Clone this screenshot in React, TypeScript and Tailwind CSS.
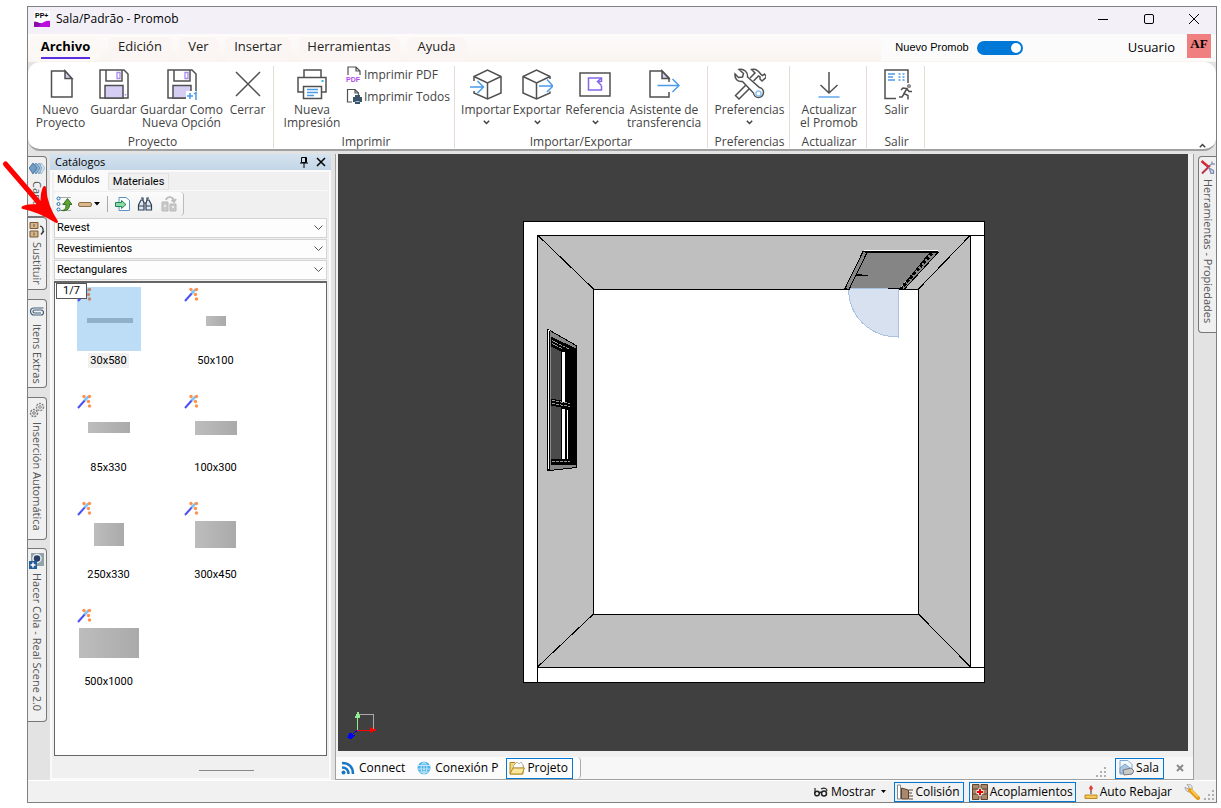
import type { ReactNode } from "react";
import clsx from "clsx";

const INK = "#505050";
const LILAC = "#d6cdf5";
const BLUE = "#4a9bea";

function Svg({ w = 32, h = 32, children }: { w?: number; h?: number; children: ReactNode }) {
  return (
    <svg
      width={w}
      height={h}
      viewBox={`0 0 ${w} ${h}`}
      fill="none"
      stroke={INK}
      strokeWidth="1.5"
      aria-hidden="true"
      className="shrink-0"
    >
      {children}
    </svg>
  );
}

/* ---------- ribbon icons ---------- */

const NewIcon = () => (
  <Svg>
    <path d="M6.5 3H20l7 8v18H6.5z" />
    <path d="M20 3v7.500h7z" fill={LILAC} />
  </Svg>
);

const SaveIcon = ({ plus = false }: { plus?: boolean }) => (
  <Svg>
    <path d={plus ? "M20 30H2V2h24l4 4v17" : "M2 2h24l4 4v24H2z"} />
    <path d="M8 2v11h16V2" />
    <path d="M7 30V17.500h18V30z" fill={LILAC} />
    <path d="M19 4.500h3v6h-3z" stroke="#a98bf0" strokeWidth="1.3" />
    {plus ? (
      <>
        <path d="M20 23h12v9H20z" fill="#fff" stroke="none" />
        <path d="M21 28h6M24 25v6M28 26l2-1.500V32" stroke={BLUE} />
      </>
    ) : (
      <path d="M27.500 26v1.500" stroke="#a98bf0" />
    )}
  </Svg>
);

const CloseIcon = () => (
  <Svg>
    <path d="M4 4l24 24M28 4L4 28" />
  </Svg>
);

const PrinterIcon = () => (
  <Svg>
    <path d="M8 9V2h17v7M7 24H2V9.500h28V24h-4" />
    <path d="M7.500 18.500h18v12h-18z" />
    <path d="M11 21.500h11M11 24.500h11M11 27.500h7" stroke={BLUE} />
    <path d="M25.500 13h2" stroke="#27b3f0" strokeWidth="2" />
  </Svg>
);

const CubeIcon = ({ out = false }: { out?: boolean }) => (
  <Svg>
    {out ? (
      <>
        <path d="M29 11V8.500L15.500 2 2 8.500V25l13.500 6L29 25v-1.500" />
        <path d="M2 8.500L15.500 15 29 8.500M15.500 15v16" />
        <path d="M18 18h14M26 11.500l6 6.500-6 6" stroke={BLUE} />
      </>
    ) : (
      <>
        <path d="M4 13V8.500L17.500 2 31 8.500V25l-13.500 6L4 25v-2" />
        <path d="M4 8.500L17.500 15 31 8.500M17.500 15v16" />
        <path d="M0 19h13M7.500 13l6 6-6 6" stroke={BLUE} />
      </>
    )}
  </Svg>
);

const ReferenceIcon = () => (
  <Svg>
    <path d="M1 5h30v23H1z" />
    <path d="M22.500 14V10H9.500v12h13v-4.500" stroke="#8566ea" />
    <path d="M22.500 10l-4 3.500 4 4M18.500 13.500h4" stroke="#8566ea" />
  </Svg>
);

const TransferIcon = () => (
  <Svg>
    <path d="M21 24v5H2V3h12l7 7v4" />
    <path d="M14 3v7.500h7z" fill={LILAC} />
    <path d="M9.500 17.500H31M24.500 11l6.500 6.500-6.500 6.500" stroke={BLUE} />
  </Svg>
);

const ToolsIcon = () => (
  <Svg>
    <path d="M5 1.500l4.500 4L8.500 9 4.500 9.500 1 6c-.5 5 2.500 8 7.500 7.500l11 11.500a5 5 0 1 0 6-5.500L13.500 9C14 4 10 .5 5 1.500z" />
    <circle cx="24.500" cy="25.500" r="2.600" stroke="#8cc3f5" />
    <path d="M16 10l5-5-3.500-3.500c4-1 7 1 9.500 5l1.500 1 2-1.500 2 3-4.500 4-2-2v-2l-1.500-1-5 5" />
    <path d="M12 17L1.500 27.500 5 31l10.500-10.500" />
  </Svg>
);

const UpdateIcon = () => (
  <Svg>
    <path d="M16 4v21M7.500 17l8.500 8 8.500-8" />
    <path d="M5.500 29h21" stroke={BLUE} strokeWidth="1.300" />
  </Svg>
);

const ExitIcon = () => (
  <Svg>
    <path d="M15 30.500H4V2h23v13" />
    <path d="M7 6h7M7 9h5M7 12h7M17.500 6h2M21.500 6h2M17.500 9h2M21.500 9h2M17.500 12h2M21.500 12h2" stroke={BLUE} />
    <circle cx="28" cy="18" r="1.300" strokeWidth="1.100" />
    <path d="M20 22l2-2 4 .5-3 5 4 2v4M23 26l-2 3h-3M26 21l2 2.500h3" />
  </Svg>
);

const PdfIcon = () => (
  <Svg w={16} h={16}>
    <path d="M2 9V1h8l4 4v4M10 1v4h4" strokeWidth="1.200" />
    <text x="0" y="16" fontSize="7" fontWeight="700" fill="#b44df0" stroke="none" fontFamily="Liberation Sans, sans-serif">
      PDF
    </text>
  </Svg>
);

const PrintAllIcon = () => (
  <Svg w={16} h={16}>
    <path d="M6 14H1.500V1.500H9L12.500 5v3M9 1.500V5h3.500" strokeWidth="1.200" />
    <path d="M9 7h5v2h2v5h-2v2H9v-2H7V9h2z" fill="#3c5468" stroke="none" />
    <path d="M9.500 13.500h4" stroke="#9fc5e8" strokeWidth="1" />
  </Svg>
);

/* ---------- ribbon ---------- */

function Chevron() {
  return (
    <svg width="7" height="5" viewBox="0 0 7 5" fill="none" stroke="#404040" strokeWidth="1.500" aria-hidden="true">
      <path d="M.8.8l2.700 2.700L6.200.8" />
    </svg>
  );
}

type ItemProps = { icon: ReactNode; width: string; label: string; menu?: boolean };

function RibbonItem({ icon, width, label, menu }: ItemProps) {
  return (
    <button className={clsx("flex flex-col items-center pt-0.5", width)}>
      {icon}
      <span className="mt-[3px] whitespace-pre">{label}</span>
      {menu && (
        <span className="mt-1">
          <Chevron />
        </span>
      )}
    </button>
  );
}

function RibbonGroup({ label, className, children }: { label: string; className: string; children: ReactNode }) {
  return (
    <section
      className={clsx("flex shrink-0 flex-col border-r border-[#e6dcd6] text-xs leading-[13px] text-[#444]", className)}
    >
      <div className="flex h-[69px] justify-center">{children}</div>
      <h2 className="text-center">{label}</h2>
    </section>
  );
}

function Ribbon() {
  return (
    <div className="flex h-[89px] shrink-0 rounded-xl border-b-2 border-[#a0a0a0] bg-white pt-1 pb-px">
      <RibbonGroup label="Proyecto" className="w-[246px] pl-1">
        <RibbonItem icon={<NewIcon />} width="w-[54px]" label={"Nuevo\nProyecto"} />
        <RibbonItem icon={<SaveIcon />} width="w-[52px]" label="Guardar" />
        <RibbonItem icon={<SaveIcon plus />} width="w-[84px]" label={"Guardar Como\nNueva Opción"} />
        <RibbonItem icon={<CloseIcon />} width="w-[48px]" label="Cerrar" />
      </RibbonGroup>
      <RibbonGroup label="Imprimir" className="w-[181px] pl-1">
        <RibbonItem icon={<PrinterIcon />} width="w-[60px]" label={"Nueva\nImpresión"} />
        <div className="ml-1 flex flex-col gap-1.5">
          <button className="flex items-center gap-0.5 whitespace-nowrap">
            <PdfIcon />
            Imprimir PDF
          </button>
          <button className="flex items-center gap-0.5 whitespace-nowrap">
            <PrintAllIcon />
            Imprimir Todos
          </button>
        </div>
      </RibbonGroup>
      <RibbonGroup label="Importar/Exportar" className="w-[253px]">
        <RibbonItem icon={<CubeIcon />} width="w-[50px]" label="Importar" menu />
        <RibbonItem icon={<CubeIcon out />} width="w-[52px]" label="Exportar" menu />
        <RibbonItem icon={<ReferenceIcon />} width="w-[64px]" label="Referencia" menu />
        <RibbonItem icon={<TransferIcon />} width="w-[74px]" label={"Asistente de\ntransferencia"} />
      </RibbonGroup>
      <RibbonGroup label="Preferencias" className="w-[82px] pl-0.5">
        <RibbonItem icon={<ToolsIcon />} width="w-[78px]" label="Preferencias" menu />
      </RibbonGroup>
      <RibbonGroup label="Actualizar" className="w-[77px] pl-0.5">
        <RibbonItem icon={<UpdateIcon />} width="w-[72px]" label={"Actualizar\nel Promob"} />
      </RibbonGroup>
      <RibbonGroup label="Salir" className="w-[58px] pl-0.5">
        <RibbonItem icon={<ExitIcon />} width="w-[52px]" label="Salir" />
      </RibbonGroup>
      <button aria-label="Contraer cinta" className="mt-auto mr-2.5 ml-auto rotate-180">
        <Chevron />
      </button>
    </div>
  );
}

/* ---------- title and menu ---------- */

function TitleBar() {
  return (
    <header className="flex h-[27px] shrink-0 items-center bg-[#f3f0f8] pb-[3px] pl-1.5 text-black">
      <svg width="16" height="16" viewBox="0 0 16 16" aria-hidden="true">
        <path d="M0 0h16v16H0z" fill="#fff" />
        <path d="M0 11c3-1 5 2 8 1s4-3 8-2v6H0z" fill="#bb0fe0" />
        <path d="M0 11c3-1 5 2 8 1l-4 4H0z" fill="#8a0cab" />
        <text x="1" y="7" fontSize="7" fontWeight="700" fontFamily="Liberation Sans, sans-serif">
          PP+
        </text>
      </svg>
      <h1 className="ml-1.5 text-xs">Sala/Padrão - Promob</h1>
      <div className="mr-4 ml-auto flex items-center gap-8">
        <button aria-label="Minimizar" className="flex w-3.5 justify-center">
          <span className="h-px w-2.5 bg-black" />
        </button>
        <button aria-label="Maximizar" className="flex w-3.5 justify-center">
          <span className="size-2.5 rounded-xs border border-black" />
        </button>
        <button aria-label="Cerrar ventana">
          <svg width="12" height="12" viewBox="0 0 12 12" stroke="#000" aria-hidden="true">
            <path d="M1 1l10 10M11 1L1 11" />
          </svg>
        </button>
      </div>
    </header>
  );
}

const MENUS = [
  { label: "Edición", width: "w-[64px]" },
  { label: "Ver", width: "w-[39px]" },
  { label: "Insertar", width: "w-[66px]" },
  { label: "Herramientas", width: "w-[102px]" },
  { label: "Ayuda", width: "w-[59px]" },
];

function MenuBar() {
  return (
    <nav className="flex h-7 shrink-0 items-start bg-linear-to-b from-[#fdfcfb] to-[#f9f4f0] text-[13px] text-[#222]">
      <div className="flex gap-[7px] pt-[3px] pl-0.5">
        <button className="flex h-6 w-[71px] justify-center rounded-md bg-[#fbf8f5] font-bold text-black">
          <span className="h-[22px] border-b-2 border-[#5b2fe0]">Archivo</span>
        </button>
        {MENUS.map((m) => (
          <button key={m.label} className={clsx("flex h-6 justify-center rounded-md bg-[#fbf6f3]", m.width)}>
            {m.label}
          </button>
        ))}
      </div>
      <div className="ml-auto flex h-[27px] items-center bg-[#fcfbfb] pl-3.5 text-black">
        <label className="flex items-center gap-2 font-['Liberation_Sans',sans-serif] text-[11px]">
          Nuevo Promob
          <input type="checkbox" defaultChecked className="peer sr-only" />
          <span className="flex h-3.5 w-[46px] items-center justify-end rounded-full bg-[#0078d7] px-0.5">
            <span className="size-2.5 rounded-full bg-white" />
          </span>
        </label>
        <button className="ml-[105px]">Usuario</button>
        <span className="mr-[5px] ml-3 flex size-6 items-start justify-center self-start bg-[#f08080] font-['Liberation_Serif',serif] text-[13px] font-bold">
          AF
        </span>
      </div>
    </nav>
  );
}

/* ---------- side tabs ---------- */

function SideTab({ icon, label, className }: { icon: ReactNode; label: string; className: string }) {
  return (
    <button
      className={clsx(
        "flex w-[19px] items-center gap-1 rounded-r border border-l-0 border-[#777] bg-[#f0f0f0] pt-1 text-[11px] leading-4 whitespace-nowrap text-[#555] [writing-mode:vertical-rl]",
        className
      )}
    >
      {icon}
      {label}
    </button>
  );
}

const LayersIcon = () => (
  <Svg w={16} h={16}>
    <path d="M9 7l3-5 4 5-4 6z" fill="#d9e6f2" stroke="#8fb0cc" strokeWidth=".8" />
    <path d="M6 7l4-5 3 5-3 6z" fill="#b4cde2" stroke="#6d97bb" strokeWidth=".8" />
    <path d="M3 7l4-5 4 5-4 6z" fill="#8fb3d3" stroke="#54809f" strokeWidth=".8" />
    <path d="M0 7l4-5 4 5-4 6z" fill="#6f9dc6" stroke="#3e6c96" strokeWidth=".8" />
  </Svg>
);

const SwapIcon = () => (
  <Svg w={16} h={16}>
    <path d="M1 .5h8v6H1zM1 9h8v6H1z" fill="#d4b48a" stroke="#7a5a34" strokeWidth="1" />
    <path d="M5 2v3M5 10.500v3" stroke="#7a5a34" strokeWidth="1" />
    <path d="M11 4c4 1 4 6 1 8M15 9l-3 3.500" strokeWidth="1.200" stroke="#333" />
  </Svg>
);

const ClipIcon = () => (
  <Svg w={16} h={16}>
    <path
      d="M14.500 4H5a3.500 3.500 0 0 0 0 7h7a2.500 2.500 0 0 0 0-5H5.500a1.500 1.500 0 0 0 0 3H12"
      strokeWidth="1.200"
      stroke="#44607c"
    />
  </Svg>
);

const GearsIcon = () => (
  <Svg w={16} h={16}>
    <circle cx="5" cy="11" r="3.500" strokeDasharray="2 1" stroke="#777" />
    <circle cx="5" cy="11" r="1.300" strokeWidth="1" stroke="#777" />
    <circle cx="11" cy="5" r="3.500" strokeDasharray="2 1" stroke="#888" />
    <circle cx="11" cy="5" r="1.300" strokeWidth="1" stroke="#888" />
  </Svg>
);

const SceneIcon = () => (
  <Svg w={16} h={16}>
    <path d="M2 0h13v13H2z" fill="#93a3a8" stroke="none" />
    <circle cx="8" cy="5.500" r="4" fill="#263f66" stroke="#e8eef2" />
    <path d="M0 8h8v8H0z" fill="#245d9c" stroke="none" />
    <path d="M1.500 12h5M4 9.500v5" stroke="#fff" />
  </Svg>
);

const PropertiesIcon = () => (
  <Svg w={16} h={16}>
    <path d="M2 14.500l8-8" stroke="#c0304a" strokeWidth="2" />
    <path d="M10 6l2-1V2.500M12 5h3" stroke="#8e9bbd" strokeWidth="1.500" />
    <path d="M1.500 2l7 6" stroke="#d02a35" strokeWidth="2.500" />
    <path d="M9 9l2 1 2.500 1.500v3h-2.500z" fill="#c9d3e8" stroke="#7f8db5" strokeWidth="1.200" />
  </Svg>
);

/* ---------- catalogue panel ---------- */

const CATALOG = [
  { name: "30x580", x: 10, y: 31, w: 46, h: 5 },
  { name: "50x100", x: 22, y: 29, w: 20, h: 10 },
  { name: "85x330", x: 11, y: 28, w: 42, h: 11 },
  { name: "100x300", x: 11, y: 27, w: 42, h: 14 },
  { name: "250x330", x: 17, y: 22, w: 30, h: 23 },
  { name: "300x450", x: 11, y: 20, w: 41, h: 27 },
  { name: "500x1000", x: 2, y: 20, w: 60, h: 30 },
];

function Thumb({ item, selected }: { item: (typeof CATALOG)[number]; selected: boolean }) {
  return (
    <button className="flex w-[107px] flex-col items-center gap-0.5">
      <svg width="64" height="64" viewBox="0 0 64 64" aria-hidden="true" className={selected ? "bg-[#bddcf5]" : ""}>
        <path d="M1 14l8-9" stroke="#4b50f5" strokeWidth="2" />
        <path d="M7.500 6.500l4-4" stroke="#7cc4f8" strokeWidth="2.500" />
        <g fill={selected ? "#c08868" : "#ff914d"}>
          <circle cx="7" cy="2.500" r="1.700" />
          <circle cx="12.500" cy="2.500" r="1.700" />
          <circle cx="11.500" cy="7.500" r="1.700" />
          <circle cx="12.500" cy="12" r="1.700" />
        </g>
        <rect x={item.x} y={item.y} width={item.w} height={item.h} fill={selected ? "#8fb0c8" : "url(#tile)"} />
      </svg>
      <span className={clsx("px-0.5 leading-[15px]", selected && "bg-[#f0f0f0]")}>{item.name}</span>
    </button>
  );
}

function Combo({ label, value }: { label: string; value: string }) {
  return (
    <div className="grid h-5 items-center border border-[#d4d4d4] bg-[#fdfdfd]">
      <select
        aria-label={label}
        defaultValue={value}
        className="col-start-1 row-start-1 h-[18px] w-full appearance-none bg-transparent pl-0.5 outline-none"
      >
        <option>{value}</option>
      </select>
      <svg
        width="9"
        height="6"
        viewBox="0 0 9 6"
        fill="none"
        stroke="#555"
        aria-hidden="true"
        className="pointer-events-none col-start-1 row-start-1 mr-[3px] justify-self-end"
      >
        <path d="M.5.500l4 4 4-4" />
      </svg>
    </div>
  );
}

function CatalogToolbar() {
  return (
    <div className="flex h-[24px] w-[130px] items-center rounded border-r border-[#bbb] bg-linear-to-b from-[#fcfcfc] to-[#f0f0f0] pl-0.5">
      <button aria-label="Subir nivel">
        <Svg w={16} h={16}>
          <path d="M3 1.500h12M3 14.500h12M6 8h9" stroke="#aaa" strokeWidth="1" />
          <path d="M5.500 14.500c4 0 4.500-3 4.500-6H7l4.500-6 4.500 6h-2.500c0 4-2 7-8 6z" fill="#5fa338" stroke="#35711b" strokeWidth="1" />
          <g fill="#fff" stroke="#1c6dad" strokeWidth="1">
            <circle cx="2.500" cy="2.500" r="1.500" />
            <circle cx="2.500" cy="8" r="1.500" />
            <circle cx="2.500" cy="13.500" r="1.500" />
          </g>
        </Svg>
      </button>
      <button aria-label="Color" className="ml-1.5 flex items-center gap-0.5">
        <span className="h-[5px] w-3.5 rounded-xs border border-[#927047] bg-[#d8b98c]" />
        <svg width="6" height="4" viewBox="0 0 6 4" aria-hidden="true">
          <path d="M0 0h6L3 3.500z" />
        </svg>
      </button>
      <span className="mx-[7px] h-4 w-px bg-[#aaa]" />
      <button aria-label="Importar módulo">
        <Svg w={16} h={16}>
          <path d="M4 1.500h7l3.500 3v10H4z" fill="#fff" stroke="#5d93c4" strokeWidth="1" />
          <path d="M.5 6.500h6v-2l4.500 4-4.500 4v-2h-6z" fill="#8fd8a8" stroke="#1f8550" strokeWidth="1" />
        </Svg>
      </button>
      <button aria-label="Buscar" className="ml-1.5">
        <Svg w={16} h={16}>
          <path d="M4 2h2v3M12 2h-2v3M1.500 14V9L4 4h2l1 3v7zM14.500 14V9L12 4h-2L9 7v7z" fill="#dfe8f2" stroke="#2e4055" strokeWidth="1.200" />
          <path d="M2 10h5M9 10h5M7 7h2" stroke="#2e4055" strokeWidth="1" />
        </Svg>
      </button>
      <button aria-label="Reemplazar" disabled className="ml-2">
        <Svg w={16} h={16}>
          <path d="M1 6h6v9H1zM9 8h6v7H9z" fill="#c9c9c9" stroke="#b8b8b8" strokeWidth="1" />
          <path d="M3 10h2M11 11h2" stroke="#f4f4f4" />
          <path d="M5 4c1-4 7-4 8 1M10.500 4l2.500 2 2-3" stroke="#bdbdbd" strokeWidth="1.800" />
        </Svg>
      </button>
    </div>
  );
}

function CatalogPanel() {
  return (
    <aside className="flex w-[281px] shrink-0 flex-col text-[11px] text-black">
      <div className="flex h-4 items-center bg-linear-to-b from-[#d5e3f0] to-[#c3d5e6] px-[5px]">
        <h2>Catálogos</h2>
        <button aria-label="Fijar" className="ml-auto">
          <svg width="8" height="11" viewBox="0 0 8 11" fill="none" stroke="#000" aria-hidden="true">
            <path d="M1.500.5h5v5h-5zM5.500.5v5M0 6h8M4 6v5" />
          </svg>
        </button>
        <button aria-label="Cerrar panel" className="ml-2">
          <svg width="10" height="10" viewBox="0 0 10 10" stroke="#000" strokeWidth="1.500" aria-hidden="true">
            <path d="M1 1l8 8M9 1L1 9" />
          </svg>
        </button>
      </div>
      <div className="flex grow flex-col border-2 border-[#fafafa] bg-[#f0f0f0] px-0.5 font-['Roboto','Liberation_Sans',sans-serif]">
        <div className="flex h-[18px] items-end">
          <button className="h-[19px] bg-[#fafafa] px-[3px] pr-2">Módulos</button>
          <button className="h-[17px] border border-[#e2e2e2] px-1 whitespace-nowrap">Materiales</button>
        </div>
        <div className="border-t border-[#fafafa] pt-px pb-0.5">
          <CatalogToolbar />
        </div>
        <div className="flex flex-col gap-px">
          <Combo label="Línea" value="Revest" />
          <Combo label="Grupo" value="Revestimientos" />
          <Combo label="Subgrupo" value="Rectangulares" />
        </div>
        <div className="relative mt-px flex grow flex-wrap content-start gap-y-[26px] border border-t-2 border-[#666] bg-white pt-1 pr-10">
          <svg width="0" height="0" className="absolute" aria-hidden="true">
            <linearGradient id="tile">
              <stop offset="0" stopColor="#bdbdbd" />
              <stop offset="1" stopColor="#aaa" />
            </linearGradient>
          </svg>
          {CATALOG.map((item, i) => (
            <Thumb key={item.name} item={item} selected={i === 0} />
          ))}
          <span className="absolute top-0 left-px border border-[#555] bg-white px-1.5 leading-[14px]">1/7</span>
        </div>
        <div className="flex h-[22px] items-center justify-center pl-[72px]">
          <span className="mt-1.5 h-px w-[55px] bg-[#888]" />
        </div>
      </div>
    </aside>
  );
}

/* ---------- 3D view ---------- */

function RoomView() {
  return (
    <svg
      viewBox="338 155 850 596"
      className="h-full w-full"
      fill="none"
      stroke="#000"
      shapeRendering="crispEdges"
      role="img"
      aria-label="Vista superior de la sala"
    >
      <path d="M523.500 221.500h461v461h-461z" fill="#fff" />
      <path d="M537.500 235.500h433v432h-433z" fill="#bfbfbf" stroke="none" />
      <path d="M593.500 289.500h325v325h-325z" fill="#fff" />
      <path d="M537.500 682V235.500H984M970.500 236V667.500M984 667.500H537.500M537.500 235.500l56 54M970.500 235.500l-52 54M537.500 667.500l56-53M970.500 667.500l-52-53" />

      {/* window */}
      <path d="M547 330l3 1 26 15v122l-26 3h-3z" fill="#888" />
      <path d="M551 337l25 12v117l-25-1z" fill="#000" stroke="none" />
      <path d="M551 347l10 5v49l-10-2zM551 406l10 2v51h-10z" fill="#4b4b4b" stroke="none" />
      <path d="M562 352h3v50h-3zM562 409h3v50h-3zM567 410h1v49h-1z" fill="#fff" stroke="none" />
      <path d="M547.500 330v140h2V331" fill="#fff" />
      <path d="M552 341l18 9M552 344l10 5M552 401l18 3M552 404l18 3M552 462h18" stroke="#999" strokeDasharray="3 1" />

      {/* door and its swing */}
      <path d="M866 253h66l-33 36h-51z" fill="#858585" stroke="none" />
      <path d="M848.500 288.500h50v49c-28 0-50-20-50-49z" fill="#d7e1f0" stroke="#a9c2df" />
      <path d="M864 250.500h74" stroke="#fff" />
      <path d="M863 252.500h75" strokeWidth="2" />
      <path d="M863 252l4 1-18 37-4-1zM930 253h8l-34 37h-4z" fill="#888" />
      <path d="M932 254l-31 35" strokeWidth="3" strokeDasharray="3 2" />
      <path d="M888 288.500h13M856 274.500h6M856 275.500h12" />

      {/* axes */}
      <path d="M358 714.500h15.500V731" stroke="#aaa" />
      <path d="M357.500 731v-15" stroke="#90ee90" />
      <path d="M358 711l-3.500 7h6z" fill="#90ee90" stroke="none" />
      <path d="M357 730.500h16" stroke="#f00" />
      <path d="M370 727.500l7 3-7 3z" fill="#f00" stroke="none" />
      <path d="M357 731l-6 5" stroke="#00f" />
      <path d="M347 738l3-5 5 3-4 4z" fill="#00f" stroke="none" />
    </svg>
  );
}

function Grip() {
  return (
    <svg width="11" height="11" viewBox="0 0 11 11" fill="#b0b0b0" aria-hidden="true">
      <path d="M8 0h2v2H8zM4 4h2v2H4zM8 4h2v2H8zM0 8h2v2H0zM4 8h2v2H4zM8 8h2v2H8z" />
    </svg>
  );
}

function ViewTabs() {
  return (
    <div className="flex h-[22px] shrink-0 items-center bg-[#f7f7f7] text-xs whitespace-nowrap text-black">
      <div className="flex h-full items-center rounded-r border-r border-[#aaa] bg-[#fcfcfc] pr-[7px] pl-[5px]">
        <button className="flex items-center gap-1">
          <Svg w={14} h={14}>
            <circle cx="2.500" cy="11.500" r="2" fill="#1976c5" stroke="none" />
            <path d="M1 6.500c4 0 6.500 2.500 6.500 6.500M1 2c7 0 11 4 11 11" stroke="#1976c5" strokeWidth="2.500" />
          </Svg>
          Connect
        </button>
        <button className="ml-3 flex items-center gap-1">
          <Svg w={14} h={14}>
            <circle cx="7" cy="7" r="6.500" fill="#4db4e8" stroke="none" />
            <path d="M1 4.500h12M.5 8h13M2 11h10M7 .5v13M7 .5c-4 4-4 9 0 13M7 .5c4 4 4 9 0 13" stroke="#d9f1fc" strokeWidth=".8" />
          </Svg>
          Conexión P
        </button>
        <button className="ml-2 flex h-[21px] items-center gap-0.5 border border-[#0078d7] px-0.5 pr-1">
          <Svg w={16} h={16}>
            <path d="M1 14V2.500h5L7.500 5H14v9z" fill="#f4d774" stroke="#b58a25" strokeWidth="1" />
            <path d="M5 5l3-3 2 2 2-2 2 3v3H4z" fill="#fff" stroke="#999" strokeWidth=".7" />
            <path d="M1 14l3-6h11.500L13 14z" fill="#fbe79b" stroke="#b58a25" strokeWidth="1" />
          </Svg>
          Projeto
        </button>
      </div>
      <span className="mt-2 mr-2 ml-auto">
        <Grip />
      </span>
      <button className="flex h-[21px] items-center gap-0.5 border border-[#0078d7] px-0.5 pr-1">
        <Svg w={16} h={16}>
          <path d="M2 .5h8l4 4V14H2z" fill="#f3f8fd" stroke="#7fa8d0" strokeWidth="1" />
          <path d="M2 8l5-4 5 4v5H2z" fill="#aac8e6" stroke="#7295b8" strokeWidth=".8" />
          <path d="M5 10l8-2 3 3-2 3-8 1z" fill="#c9c9c9" stroke="#666" strokeWidth=".8" />
        </Svg>
        Sala
      </button>
      <button aria-label="Cerrar vista" className="mr-[9px] ml-3">
        <svg width="8" height="8" viewBox="0 0 8 8" stroke="#8a8a8a" strokeWidth="2" aria-hidden="true">
          <path d="M1 1l6 6M7 1L1 7" />
        </svg>
      </button>
    </div>
  );
}

/* ---------- status bar ---------- */

function StatusBar() {
  return (
    <footer className="flex h-[22px] shrink-0 items-center justify-end border-t border-white bg-[#f1f1f1] text-xs whitespace-nowrap text-black">
      <button className="flex items-center gap-0.5">
        <Svg w={16} h={10}>
          <path d="M2 1v5M8 2c4-2 6 0 6 2" strokeWidth="1.200" stroke="#222" />
          <circle cx="4" cy="6.500" r="2.300" stroke="#222" />
          <circle cx="11" cy="6.500" r="2.500" stroke="#222" />
          <path d="M6 6c1-1 2-1 3 0" stroke="#222" />
        </Svg>
        Mostrar
        <svg width="5" height="3" viewBox="0 0 5 3" className="ml-1" aria-hidden="true">
          <path d="M0 0h5L2.500 3z" />
        </svg>
      </button>
      <button className="ml-2 flex h-5 items-center gap-0.5 border border-[#0078d7] px-0.5 pr-[3px]">
        <Svg w={16} h={16}>
          <path d="M.5 1h3v14h-3z" fill="#fff" stroke="#888" strokeWidth="1" />
          <path d="M4.500 4l7 2v9h-7z" fill="#a8876a" stroke="#5d4230" strokeWidth="1" />
          <path d="M12 6h4M12 9h3M12 12h4M12 15h4" strokeWidth="1" stroke="#5d4230" />
        </Svg>
        Colisión
      </button>
      <button className="ml-[5px] flex h-5 items-center gap-0.5 border border-[#0078d7] px-0.5">
        <Svg w={16} h={16}>
          <path d="M.5.5h6.500v15H.5zM9 .5h6.500v15H9z" fill="#a8876a" stroke="#5d4230" strokeWidth="1" />
          <path d="M1 5h6M1 10h6M9 5h6M9 10h6" stroke="#5d4230" strokeWidth="1" />
          <path d="M8 4.500v7M4.500 8h7" stroke="#fff" strokeWidth="4" />
          <path d="M8 5v6M5 8h6" stroke="#e00" strokeWidth="2.200" />
        </Svg>
        Acoplamientos
      </button>
      <button className="ml-2 flex items-center gap-0.5">
        <Svg w={14} h={16}>
          <path d="M7 1l2 3-2 4-2-4z" fill="#e04040" stroke="none" />
          <path d="M7 7v3" stroke="#333" strokeWidth="1" />
          <path d="M1 11h12v3.500H1z" fill="#f5c85a" stroke="#c08a20" strokeWidth="1" />
        </Svg>
        Auto Rebajar
      </button>
      <button aria-label="Configurar" className="ml-3">
        <Svg w={16} h={16}>
          <path d="M1 3l3 2 1-2-2-2.500c4-1 6 2 5 5L5.500 8C3 8 1 6 1 3z" fill="#e4e4e4" stroke="#999" strokeWidth=".8" />
          <path d="M6 6l8 8" stroke="#e79a14" strokeWidth="4" strokeLinecap="round" />
          <path d="M7 6l7 7" stroke="#fcd25f" strokeWidth="1.500" />
        </Svg>
      </button>
      <span className="mt-2 mr-px ml-1">
        <Grip />
      </span>
    </footer>
  );
}

export default function App() {
  return (
    <div className="relative flex h-screen bg-white pt-1.5 pr-1 pb-[5px] pl-[27px] font-['Open_Sans','Noto_Sans',sans-serif]">
      <div className="flex min-w-0 grow flex-col border border-[#808080] bg-[#e3e3e3]">
        <TitleBar />
        <MenuBar />
        <Ribbon />
        <div className="flex min-h-0 grow pt-[3px]">
          <div className="flex w-[22px] shrink-0 flex-col pt-0.5">
            <SideTab icon={<LayersIcon />} label="Capas" className="h-[61px]" />
            <SideTab icon={<SwapIcon />} label="Sustituir" className="h-[73px]" />
            <SideTab icon={<ClipIcon />} label="Itens Extras" className="mt-[9px] h-[89px]" />
            <SideTab icon={<GearsIcon />} label="Inserción Automática" className="mt-[9px] h-[143px]" />
            <SideTab icon={<SceneIcon />} label="Hacer Cola - Real Scene 2.0" className="mt-2 h-[174px]" />
          </div>
          <CatalogPanel />
          <main className="ml-1 flex min-w-0 grow flex-col border border-t-0 border-[#a0a0a0] bg-[#f0f0f0]">
            <div className="mr-[5px] mb-1.5 ml-0.5 min-h-0 grow bg-[#404040]">
              <RoomView />
            </div>
            <ViewTabs />
          </main>
          <div className="ml-1 flex flex-col pt-0.5">
            <button className="flex h-[177px] w-[18px] items-center gap-1 rounded-l border border-r-0 border-[#777] bg-[#f0f0f0] pt-0.5 text-[11px] leading-4 whitespace-nowrap text-[#555] [writing-mode:vertical-rl]">
              <PropertiesIcon />
              Herramientas - Propiedades
            </button>
          </div>
        </div>
        <StatusBar />
      </div>

      {/* arrow pointing at the first drop-down */}
      <svg
        width="60"
        height="68"
        viewBox="0 0 60 68"
        fill="#f00"
        stroke="#f00"
        strokeLinejoin="round"
        strokeLinecap="round"
        aria-hidden="true"
        className="pointer-events-none absolute top-[158px] left-0"
      >
        <path d="M5.500 6L40 46" strokeWidth="5" />
        <path d="M23 49.500c4-2 9-2 14-2l5-4c0-5 0-10 2.500-14 1 12 5 24 12 34-10-6-21-12-33.500-14z" strokeWidth="3" />
      </svg>
    </div>
  );
}
